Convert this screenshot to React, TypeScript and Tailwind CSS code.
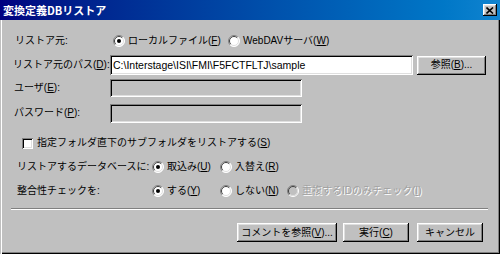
import React from "react";

const raised =
  "bg-[#c0c0c0] shadow-[inset_-1px_-1px_#000,inset_1px_1px_#fff,inset_-2px_-2px_#808080,inset_2px_2px_#dfdfdf]";
const sunken =
  "shadow-[inset_1px_1px_#808080,inset_-1px_-1px_#fff,inset_2px_2px_#000,inset_-2px_-2px_#dfdfdf]";

const Radio = ({ checked = false, disabled = false }: { checked?: boolean; disabled?: boolean }) => (
  <svg width="12" height="12" viewBox="0 0 12 12" className="shrink-0">
    <circle cx="6" cy="6" r="5.5" fill={disabled ? "#c0c0c0" : "#fff"} />
    <path d="M2.1 9.9 A5.5 5.5 0 0 1 9.9 2.1" stroke="#808080" fill="none" />
    <path d="M9.9 2.1 A5.5 5.5 0 0 1 2.1 9.9" stroke="#fff" fill="none" />
    <path d="M2.8 9.2 A4.5 4.5 0 0 1 9.2 2.8" stroke="#404040" fill="none" />
    <path d="M9.2 2.8 A4.5 4.5 0 0 1 2.8 9.2" stroke="#dfdfdf" fill="none" />
    {checked && <circle cx="6" cy="6" r="2" fill="#000" />}
  </svg>
);

const Opt = ({
  label,
  mn,
  after = "",
  checked = false,
  disabled = false,
  className = "",
}: {
  label: string;
  mn: string;
  after?: string;
  checked?: boolean;
  disabled?: boolean;
  className?: string;
}) => (
  <div className={"flex items-center gap-[3px] " + className}>
    <Radio checked={checked} disabled={disabled} />
    <span className={disabled ? "text-[#a0a0a0] [text-shadow:1px_1px_#fff]" : ""}>
      {label}(<u>{mn}</u>){after}
    </span>
  </div>
);

const Btn = ({ children, w }: { children: React.ReactNode; w: string }) => (
  <div className={"h-[19px] flex items-center justify-center " + raised + " " + w}>{children}</div>
);

export default function App() {
  return (
    <div className="w-[500px] h-[254px] bg-[#c0c0c0] flex flex-col text-[10px] text-black font-['Liberation_Sans_Narrow','Liberation_Sans','Noto_Sans_CJK_JP',sans-serif] leading-none">
      {/* title bar */}
      <div className="h-[20px] shrink-0 flex items-center justify-between bg-gradient-to-r from-[#000080] to-[#1084d0] pl-[3px] pr-[3px]">
        <span className="text-white font-bold text-[11px] font-['Noto_Sans_CJK_JP',sans-serif]">変換定義DBリストア</span>
        <div className={"w-[14px] h-[12px] flex items-center justify-center " + raised}>
          <svg width="8" height="7" viewBox="0 0 8 7">
            <path d="M0.5 0.5 L7 6.5 M7 0.5 L0.5 6.5" stroke="#000" strokeWidth="1.6" />
          </svg>
        </div>
      </div>

      {/* body */}
      <div className="flex-1 flex flex-col shadow-[inset_1px_0_#c0c0c0,inset_2px_0_#fff,inset_-1px_-1px_#000,inset_-2px_-2px_#808080]">
        <div className="mt-[11px] h-[20px] flex items-center">
          <span className="w-[110px] pl-[15px]">リストア元:</span>
          <Opt label="ローカルファイル" mn="F" checked className="ml-[3px] w-[115px]" />
          <Opt label="WebDAVサーバ" mn="W" />
        </div>

        <div className="mt-[4px] h-[20px] flex items-center">
          <span className="w-[110px] pl-[13px]">
            リストア元のパス(<u>D</u>):
          </span>
          <div className={"w-[303px] h-[20px] bg-white flex items-center pl-[3px] text-[10.5px] " + sunken}>
            C:\Interstage\ISI\FMI\F5FCTFLTJ\sample
          </div>
          <Btn w="w-[69px] ml-[4px]">
            参照(<u>B</u>)...
          </Btn>
        </div>

        <div className="mt-[3px] h-[20px] flex items-center">
          <span className="w-[110px] pl-[14px]">
            ユーザ(<u>E</u>):
          </span>
          <div className={"w-[192px] h-[18px] " + sunken} />
        </div>

        <div className="mt-[5px] h-[20px] flex items-center">
          <span className="w-[110px] pl-[14px]">
            パスワード(<u>P</u>):
          </span>
          <div className={"w-[192px] h-[19px] " + sunken} />
        </div>

        <div className="mt-[10px] h-[20px] flex items-center pl-[22px] gap-[4px]">
          <div className={"w-[11px] h-[11px] bg-white " + sunken} />
          <span>
            指定フォルダ直下のサブフォルダをリストアする(<u>S</u>)
          </span>
        </div>

        <div className="mt-[4px] h-[20px] flex items-center">
          <span className="w-[152px] pl-[17px]">リストアするデータベースに:</span>
          <Opt label="取込み" mn="U" checked className="w-[68px]" />
          <Opt label="入替え" mn="R" />
        </div>

        <div className="mt-[4px] h-[20px] flex items-center">
          <span className="w-[152px] pl-[17px]">整合性チェックを:</span>
          <Opt label="する" mn="Y" checked className="w-[68px]" />
          <Opt label="しない" mn="N" className="w-[67px]" />
          <Opt label="重複するIDのみチェック" mn="I" disabled />
        </div>

        <div className="mt-[7px] ml-[11px] w-[477px] h-[2px] border-t border-t-[#808080] border-b border-b-white" />

        <div className="mt-[13px] flex justify-end pr-[17px]">
          <Btn w="w-[100px]">
            コメントを参照(<u>V</u>)...
          </Btn>
          <Btn w="w-[66px] ml-[6px]">
            実行(<u>C</u>)
          </Btn>
          <Btn w="w-[66px] ml-[8px]">キャンセル</Btn>
        </div>
      </div>
    </div>
  );
}
